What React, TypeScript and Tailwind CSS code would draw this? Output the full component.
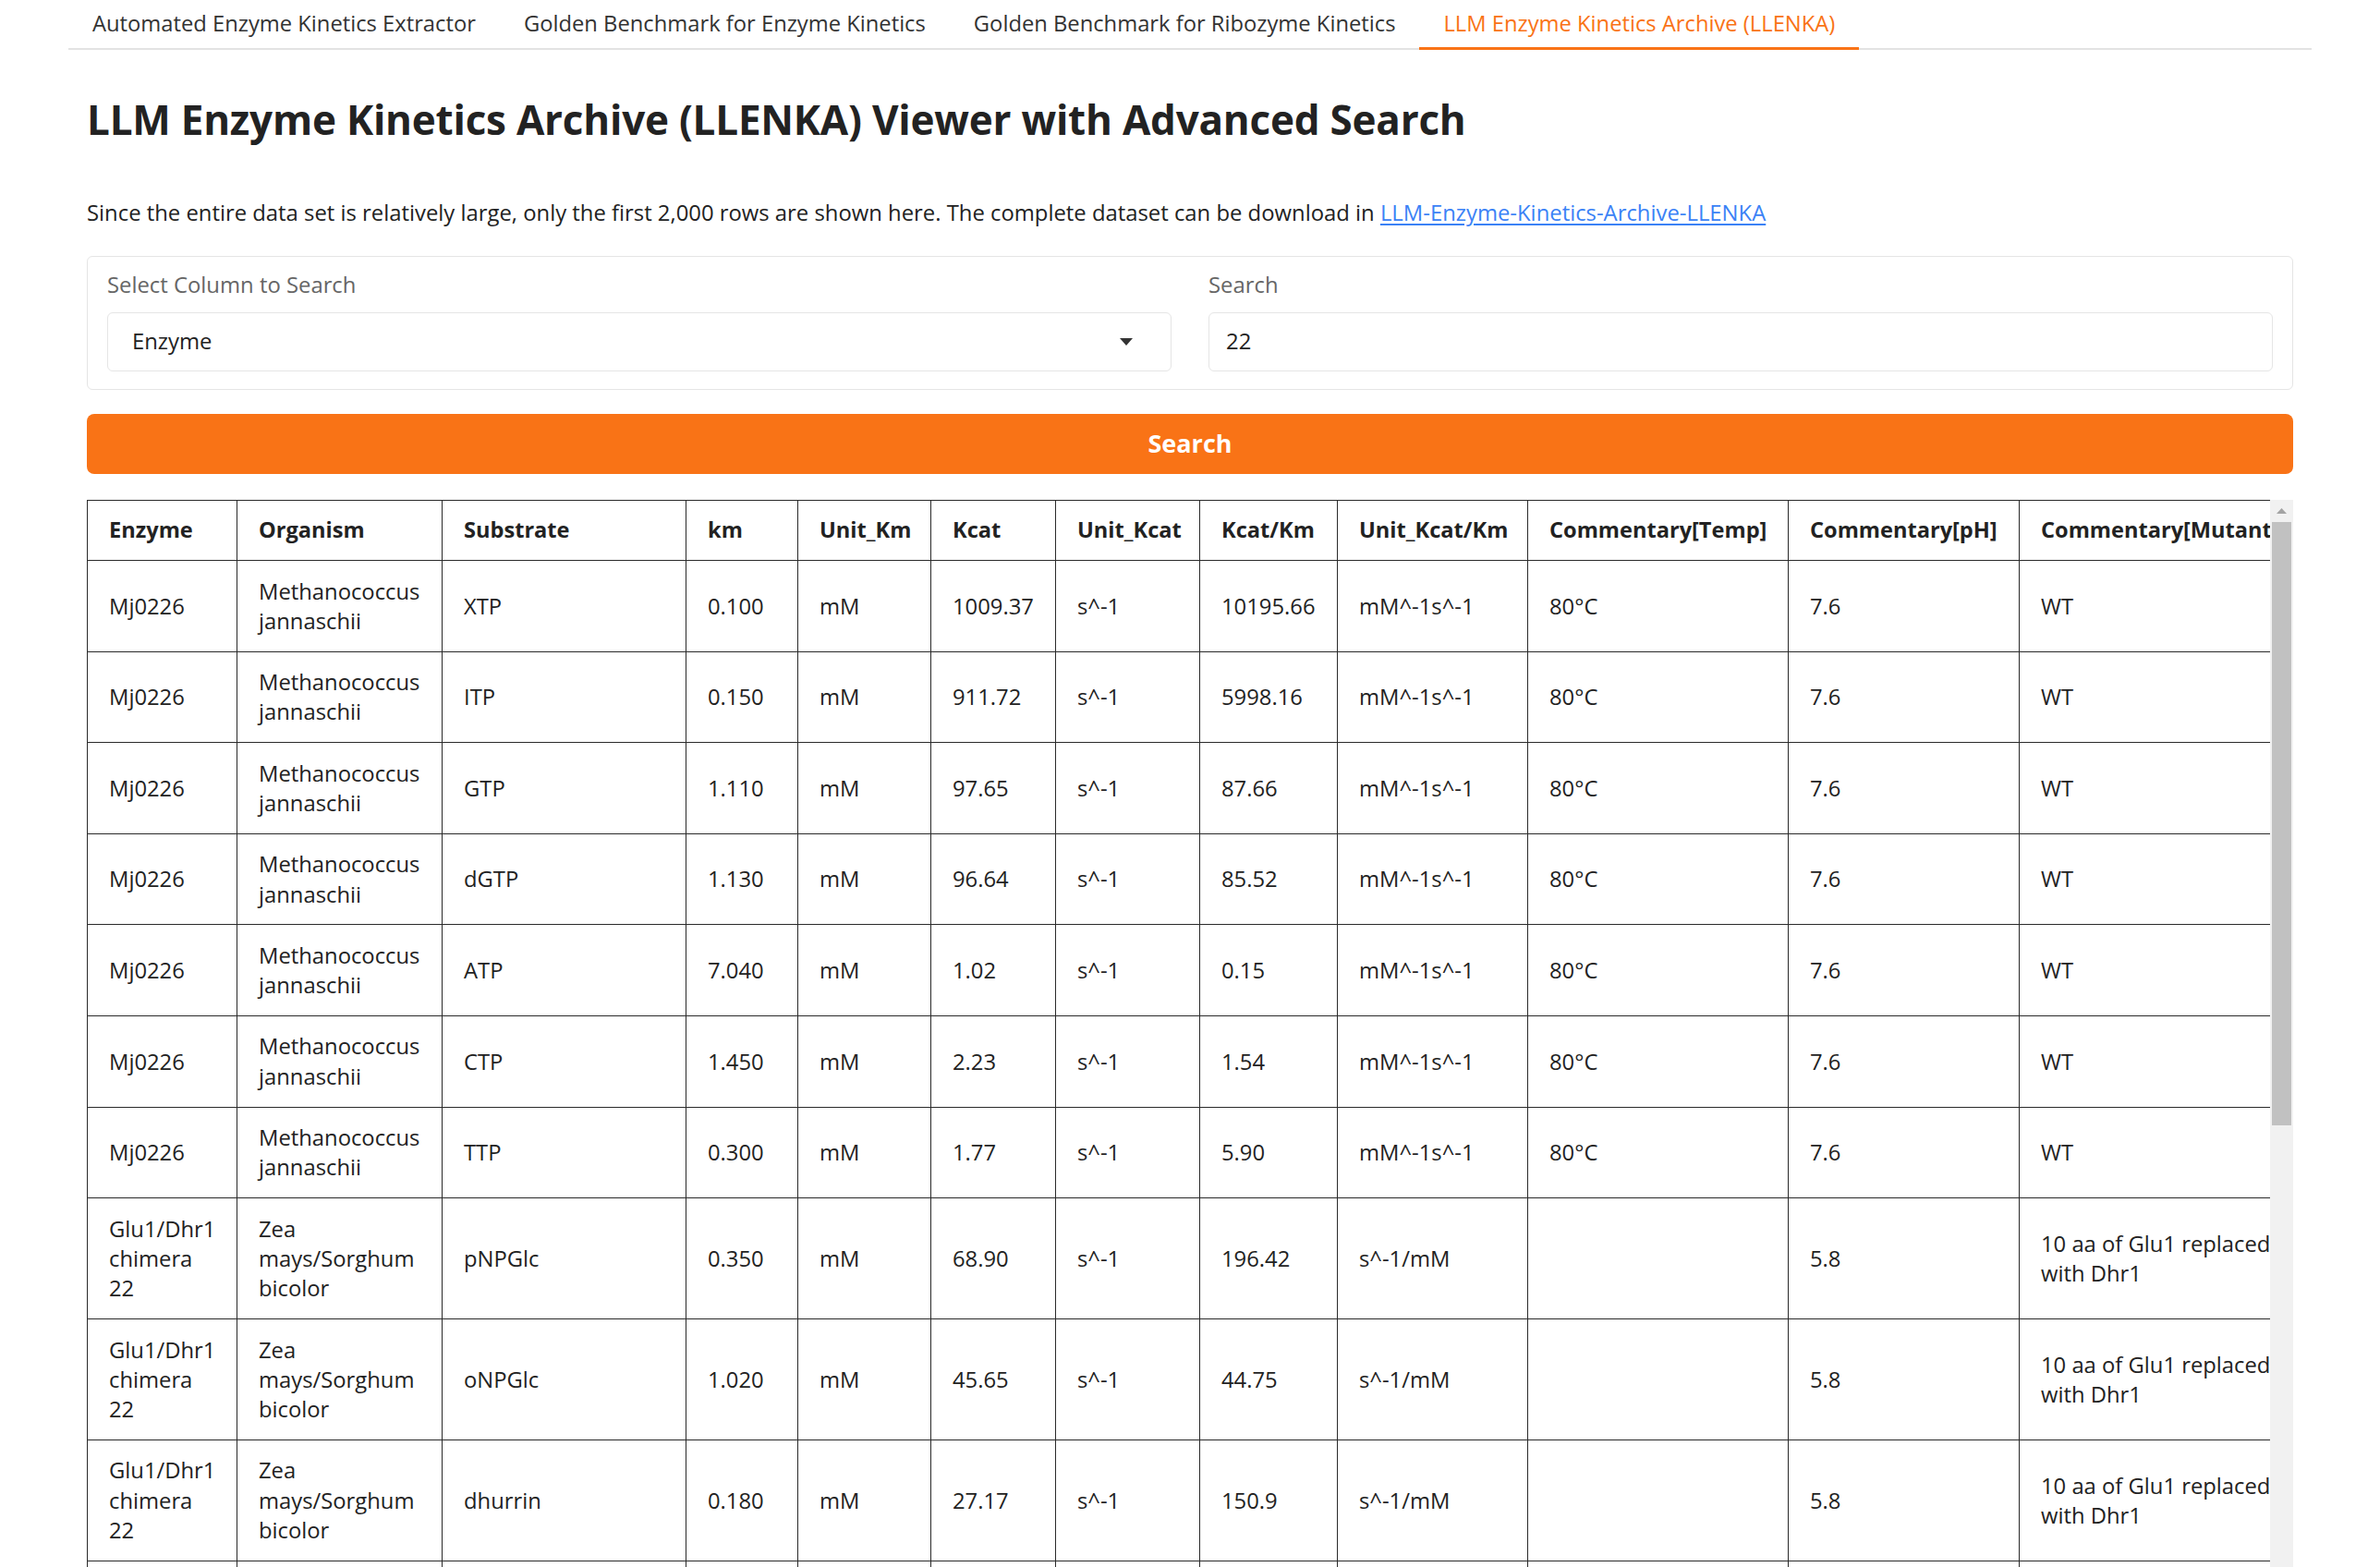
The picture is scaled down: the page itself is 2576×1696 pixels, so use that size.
import React from "react";

type Row = {
  e: string[];
  o: string[];
  s: string;
  km: string;
  ukm: string;
  kcat: string;
  ukcat: string;
  kk: string;
  ukk: string;
  t: string;
  ph: string;
  m: string[];
};

const mj = (s: string, km: string, kcat: string, kk: string): Row => ({
  e: ["Mj0226"],
  o: ["Methanococcus", "jannaschii"],
  s,
  km,
  ukm: "mM",
  kcat,
  ukcat: "s^-1",
  kk,
  ukk: "mM^-1s^-1",
  t: "80°C",
  ph: "7.6",
  m: ["WT"],
});

const glu = (s: string, km: string, kcat: string, kk: string): Row => ({
  e: ["Glu1/Dhr1", "chimera", "22"],
  o: ["Zea", "mays/Sorghum", "bicolor"],
  s,
  km,
  ukm: "mM",
  kcat,
  ukcat: "s^-1",
  kk,
  ukk: "s^-1/mM",
  t: "",
  ph: "5.8",
  m: ["10 aa of Glu1 replaced", "with Dhr1"],
});

const rows: Row[] = [
  mj("XTP", "0.100", "1009.37", "10195.66"),
  mj("ITP", "0.150", "911.72", "5998.16"),
  mj("GTP", "1.110", "97.65", "87.66"),
  mj("dGTP", "1.130", "96.64", "85.52"),
  mj("ATP", "7.040", "1.02", "0.15"),
  mj("CTP", "1.450", "2.23", "1.54"),
  mj("TTP", "0.300", "1.77", "5.90"),
  glu("pNPGlc", "0.350", "68.90", "196.42"),
  glu("oNPGlc", "1.020", "45.65", "44.75"),
  glu("dhurrin", "0.180", "27.17", "150.9"),
  glu("pNPGal", "0.410", "12.30", "30.00"),
  glu("oNPGal", "0.520", "10.10", "19.42"),
];

const headers = [
  "Enzyme",
  "Organism",
  "Substrate",
  "km",
  "Unit_Km",
  "Kcat",
  "Unit_Kcat",
  "Kcat/Km",
  "Unit_Kcat/Km",
  "Commentary[Temp]",
  "Commentary[pH]",
  "Commentary[Mutant]",
];

const tabs = [
  "Automated Enzyme Kinetics Extractor",
  "Golden Benchmark for Enzyme Kinetics",
  "Golden Benchmark for Ribozyme Kinetics",
  "LLM Enzyme Kinetics Archive (LLENKA)",
];

function Lines({ lines }: { lines: string[] }) {
  return (
    <>
      {lines.map((l, i) => (
        <div key={i} className="whitespace-nowrap">
          {l}
        </div>
      ))}
    </>
  );
}

const td = "border border-[#2a2a2a] px-[23px] py-[16.5px] text-[23.8px] leading-[32.3px] align-middle whitespace-nowrap";
const th = "border border-[#2a2a2a] px-[23px] pt-[15px] pb-[17px] text-[23.6px] leading-[32px] text-left font-bold whitespace-nowrap";

export default function App() {
  return (
    <div className="h-[1696px] overflow-hidden bg-white font-['Open_Sans',sans-serif] text-[23.85px] text-[#222] flex flex-col">
      <div className="mx-[74px] flex flex-col flex-1 min-h-0">
        {/* Tabs */}
        <div className="flex border-b-2 border-[#e3e3e3]">
          {tabs.map((t, i) => (
            <div
              key={t}
              className={
                i === 3
                  ? "relative h-[52px] px-[26px] flex items-center text-[23.75px] text-[#f97316]"
                  : "relative h-[52px] px-[26px] flex items-center text-[23.75px] text-[#333]"
              }
            >
              {t}
              {i === 3 && (
                <span className="absolute left-0 right-0 bottom-[-2px] h-[3px] bg-[#f97316]" />
              )}
            </div>
          ))}
        </div>

        <div className="px-5 flex flex-col flex-1 min-h-0">
          <h1 className="mt-[47px] text-[44px] leading-[56px] font-bold text-[#222] tracking-[-0.22px]">
            LLM Enzyme Kinetics Archive (LLENKA) Viewer with Advanced Search
          </h1>

          <p className="mt-[57px] leading-[32px] text-[#222]">
            Since the entire data set is relatively large, only the first 2,000 rows are shown here. The complete dataset can be download in{" "}
            <a className="text-[#3b82f6] underline underline-offset-[3px]" href="#">
              LLM-Enzyme-Kinetics-Archive-LLENKA
            </a>
          </p>

          {/* Search panel */}
          <div className="mt-[31px] border border-[#e5e5e5] rounded-[6px] px-[21px] pt-[14px] pb-[19px] grid grid-cols-2 gap-x-10">
            <div className="flex flex-col">
              <label className="leading-[32px] text-[#666]">Select Column to Search</label>
              <div className="mt-[14px] h-[64px] border border-[#e5e5e5] rounded-[6px] flex items-center justify-between pl-[26px] pr-[41px]">
                <span className="text-[#222]">Enzyme</span>
                <svg width="14" height="8" viewBox="0 0 14 8">
                  <polygon points="0,0 14,0 7,8" fill="#333" />
                </svg>
              </div>
            </div>
            <div className="flex flex-col">
              <label className="leading-[32px] text-[#666]">Search</label>
              <div className="mt-[14px] h-[64px] border border-[#e5e5e5] rounded-[6px] flex items-center pl-[18px]">
                <span className="text-[#222]">22</span>
              </div>
            </div>
          </div>

          <button className="mt-[26px] h-[65px] w-full rounded-[8px] bg-[#f97316] text-white text-[27px] font-bold flex items-center justify-center">
            Search
          </button>

          {/* Table area */}
          <div className="mt-[28px] flex flex-1 min-h-0">
            <div className="flex-1 min-w-0 overflow-hidden">
              <table className="table-fixed border-collapse w-[2401px]">
                <colgroup>
                  <col className="w-[162px]" />
                  <col className="w-[222px]" />
                  <col className="w-[264px]" />
                  <col className="w-[121px]" />
                  <col className="w-[144px]" />
                  <col className="w-[135px]" />
                  <col className="w-[156px]" />
                  <col className="w-[149px]" />
                  <col className="w-[206px]" />
                  <col className="w-[282px]" />
                  <col className="w-[250px]" />
                  <col className="w-[310px]" />
                </colgroup>
                <thead>
                  <tr>
                    {headers.map((h) => (
                      <th key={h} className={th}>
                        {h}
                      </th>
                    ))}
                  </tr>
                </thead>
                <tbody>
                  {rows.map((r, i) => (
                    <tr key={i}>
                      <td className={td}>
                        <Lines lines={r.e} />
                      </td>
                      <td className={td}>
                        <Lines lines={r.o} />
                      </td>
                      <td className={td}>{r.s}</td>
                      <td className={td}>{r.km}</td>
                      <td className={td}>{r.ukm}</td>
                      <td className={td}>{r.kcat}</td>
                      <td className={td}>{r.ukcat}</td>
                      <td className={td}>{r.kk}</td>
                      <td className={td}>{r.ukk}</td>
                      <td className={td}>{r.t}</td>
                      <td className={td}>{r.ph}</td>
                      <td className={td}>
                        <Lines lines={r.m} />
                      </td>
                    </tr>
                  ))}
                </tbody>
              </table>
            </div>
            {/* Scrollbar */}
            <div className="w-[25px] bg-[#f1f1f1] flex flex-col items-center shrink-0">
              <div className="h-[24px] flex items-center justify-center">
                <svg width="11" height="6" viewBox="0 0 11 6">
                  <polygon points="0,6 11,6 5.5,0" fill="#a3a3a3" />
                </svg>
              </div>
              <div className="w-[21px] h-[653px] bg-[#c1c1c1]" />
            </div>
          </div>
        </div>
      </div>
    </div>
  );
}
